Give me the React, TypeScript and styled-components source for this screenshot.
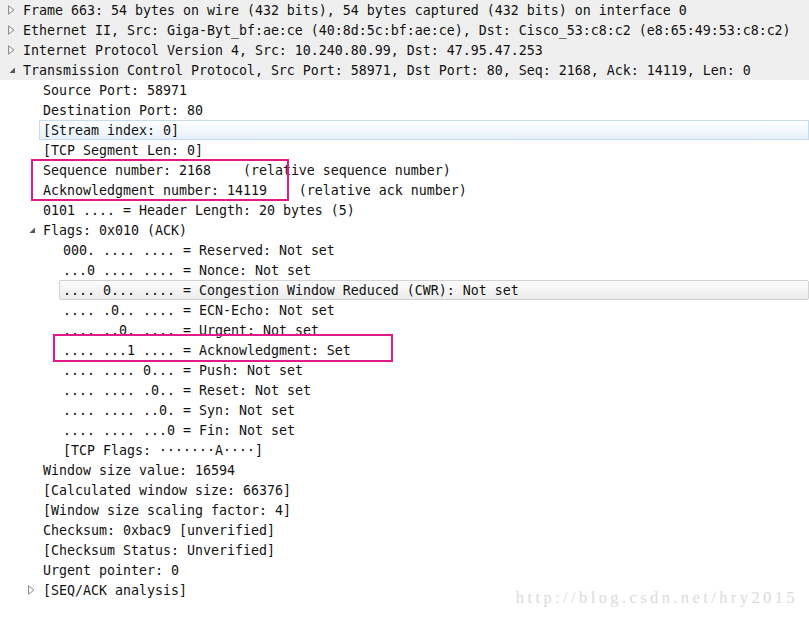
import React from "react";
import styled, { createGlobalStyle } from "styled-components";

const rowHeight = 20;
const indent = 20;
const pink = "#e3198a";

const GlobalStyle = createGlobalStyle`
  html, body {
    margin: 0;
    padding: 0;
    background: #fff;
  }
  body {
    width: 809px;
    height: 618px;
    overflow: hidden;
  }
`;

const Pane = styled.div`
  position: relative;
  width: 809px;
  height: 618px;
  font-family: "DejaVu Sans Mono", "Liberation Mono", monospace;
  font-size: 13.29px;
  color: #111;
`;

const Tree = styled.ul`
  list-style: none;
  margin: 0;
  padding: 0;
`;

const Row = styled.li<{ $level: number; $shade?: boolean }>`
  display: flex;
  align-items: stretch;
  height: ${rowHeight}px;
  padding-left: ${(p) => p.$level * indent}px;
  background: ${(p) => (p.$shade ? "#efefef" : "transparent")};
`;

const Toggle = styled.span`
  flex: 0 0 ${indent}px;
  display: flex;
  align-items: center;
  padding-left: 8px;
  box-sizing: border-box;
`;

type Mark = "none" | "selected" | "hover";

const Label = styled.span<{ $mark: Mark }>`
  flex: 1;
  display: flex;
  align-items: center;
  padding: 1px 0 0 3px;
  box-sizing: border-box;
  white-space: pre;
  line-height: 1;
  border: 1px solid transparent;
  margin-left: -1px;
  ${(p) =>
    p.$mark === "selected" &&
    `
    border-color: #c6dbee;
    background: linear-gradient(#fdfeff, #e6f0fa);
  `}
  ${(p) =>
    p.$mark === "hover" &&
    `
    border-color: #d2d2d2;
    border-radius: 2px;
    background: linear-gradient(#fbfbfb, #ececec);
  `}
`;

const Annotation = styled.div`
  position: absolute;
  border: 2px solid ${pink};
  box-sizing: border-box;
  pointer-events: none;
`;

const Watermark = styled.div`
  position: absolute;
  right: 11px;
  bottom: 10px;
  font-family: "Liberation Serif", "DejaVu Serif", serif;
  font-size: 16.5px;
  letter-spacing: 3.4px;
  color: #dbdbdb;
`;

const Collapsed = () => (
  <svg width="7" height="10" viewBox="0 0 7 10">
    <path d="M0.5 0.8 L6 5 L0.5 9.2 Z" fill="none" stroke="#8c8c8c" strokeWidth="1" />
  </svg>
);

const Expanded = () => (
  <svg width="7" height="7" viewBox="0 0 7 7" style={{ marginLeft: 1, marginTop: 1 }}>
    <path d="M6 0.5 L6 6 L0.5 6 Z" fill="#555" />
  </svg>
);

type Item = {
  text: string;
  level: number;
  toggle?: "open" | "closed";
  mark?: Mark;
  shade?: boolean;
};

const items: Item[] = [
  { level: 0, toggle: "closed", shade: true, text: "Frame 663: 54 bytes on wire (432 bits), 54 bytes captured (432 bits) on interface 0" },
  { level: 0, toggle: "closed", shade: true, text: "Ethernet II, Src: Giga-Byt_bf:ae:ce (40:8d:5c:bf:ae:ce), Dst: Cisco_53:c8:c2 (e8:65:49:53:c8:c2)" },
  { level: 0, toggle: "closed", shade: true, text: "Internet Protocol Version 4, Src: 10.240.80.99, Dst: 47.95.47.253" },
  { level: 0, toggle: "open", shade: true, text: "Transmission Control Protocol, Src Port: 58971, Dst Port: 80, Seq: 2168, Ack: 14119, Len: 0" },
  { level: 1, text: "Source Port: 58971" },
  { level: 1, text: "Destination Port: 80" },
  { level: 1, text: "[Stream index: 0]", mark: "selected" },
  { level: 1, text: "[TCP Segment Len: 0]" },
  { level: 1, text: "Sequence number: 2168    (relative sequence number)" },
  { level: 1, text: "Acknowledgment number: 14119    (relative ack number)" },
  { level: 1, text: "0101 .... = Header Length: 20 bytes (5)" },
  { level: 1, toggle: "open", text: "Flags: 0x010 (ACK)" },
  { level: 2, text: "000. .... .... = Reserved: Not set" },
  { level: 2, text: "...0 .... .... = Nonce: Not set" },
  { level: 2, text: ".... 0... .... = Congestion Window Reduced (CWR): Not set", mark: "hover" },
  { level: 2, text: ".... .0.. .... = ECN-Echo: Not set" },
  { level: 2, text: ".... ..0. .... = Urgent: Not set" },
  { level: 2, text: ".... ...1 .... = Acknowledgment: Set" },
  { level: 2, text: ".... .... 0... = Push: Not set" },
  { level: 2, text: ".... .... .0.. = Reset: Not set" },
  { level: 2, text: ".... .... ..0. = Syn: Not set" },
  { level: 2, text: ".... .... ...0 = Fin: Not set" },
  { level: 2, text: "[TCP Flags: \u00b7\u00b7\u00b7\u00b7\u00b7\u00b7\u00b7A\u00b7\u00b7\u00b7\u00b7]" },
  { level: 1, text: "Window size value: 16594" },
  { level: 1, text: "[Calculated window size: 66376]" },
  { level: 1, text: "[Window size scaling factor: 4]" },
  { level: 1, text: "Checksum: 0xbac9 [unverified]" },
  { level: 1, text: "[Checksum Status: Unverified]" },
  { level: 1, text: "Urgent pointer: 0" },
  { level: 1, toggle: "closed", text: "[SEQ/ACK analysis]" },
];

export default function App() {
  return (
    <>
      <GlobalStyle />
      <Pane>
        <Tree>
          {items.map((item, i) => (
            <Row key={i} $level={item.level} $shade={item.shade}>
              <Toggle>
                {item.toggle === "closed" && <Collapsed />}
                {item.toggle === "open" && <Expanded />}
              </Toggle>
              <Label $mark={item.mark ?? "none"}>{item.text}</Label>
            </Row>
          ))}
        </Tree>
        <Annotation style={{ left: 31, top: 159, width: 258, height: 42 }} />
        <Annotation style={{ left: 53, top: 334, width: 340, height: 28 }} />
        <Watermark>http://blog.csdn.net/hry2015</Watermark>
      </Pane>
    </>
  );
}
